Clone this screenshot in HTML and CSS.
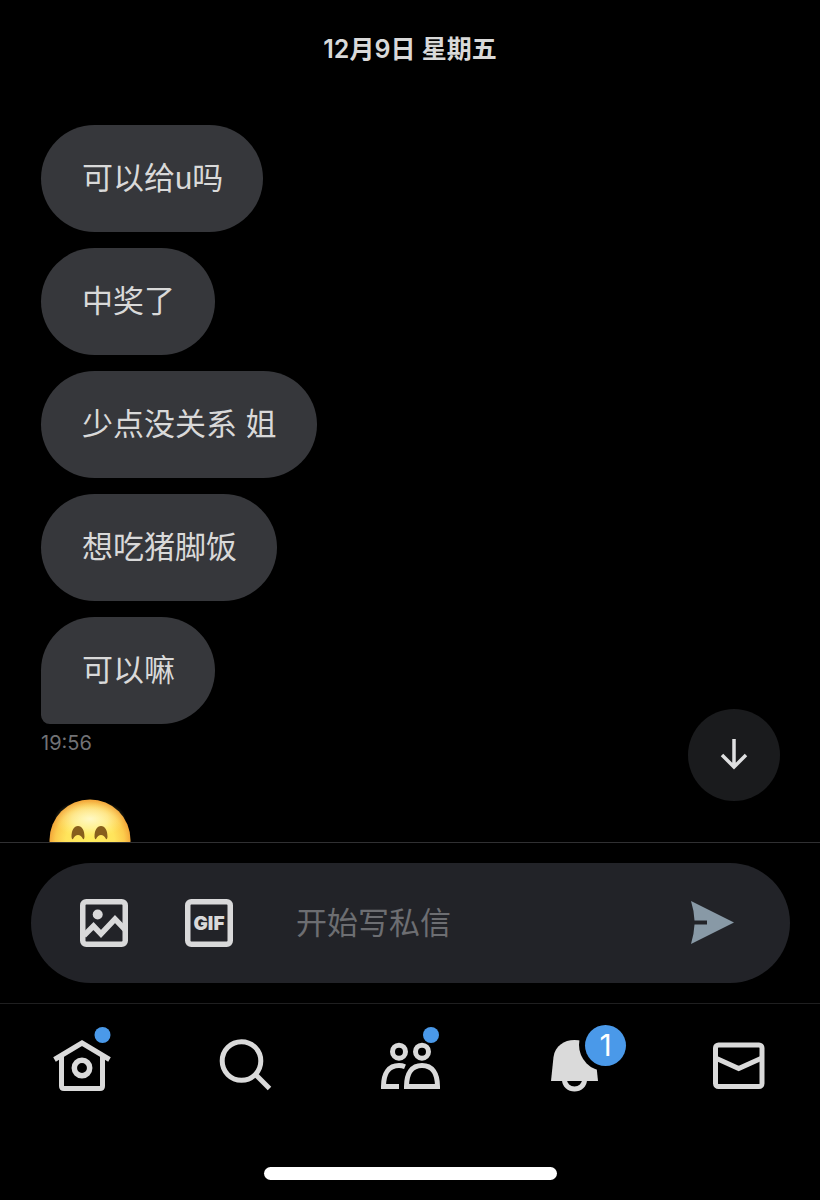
FILE: index.html
```html
<!DOCTYPE html>
<html lang="zh-CN">
<head>
    <meta charset="UTF-8">
    <meta name="viewport" content="width=device-width, initial-scale=1.0">
    <title>私信</title>
    <link rel="stylesheet" href="styles.css">
</head>
<body>
    <main class="conversation">
        <h1 class="date">12月9日 星期五</h1>
        <div class="messages">
            <div class="bubble">可以给u吗</div>
            <div class="bubble">中奖了</div>
            <div class="bubble">少点没关系 姐</div>
            <div class="bubble">想吃猪脚饭</div>
            <div class="bubble last">可以嘛</div>
        </div>
        <time class="time">19:56</time>
        <svg class="emoji" viewBox="0 0 82 82" role="img" aria-label="😊">
            <defs>
                <radialGradient id="face" cx="0.5" cy="0.52" r="0.5">
                    <stop offset="0" stop-color="#ffee5e"/>
                    <stop offset="0.6" stop-color="#ffe45c"/>
                    <stop offset="0.85" stop-color="#fccb4c"/>
                    <stop offset="1" stop-color="#f3a83a"/>
                </radialGradient>
                <radialGradient id="shine">
                    <stop offset="0" stop-color="#fffde0" stop-opacity="0.8"/>
                    <stop offset="0.5" stop-color="#fffbc8" stop-opacity="0.5"/>
                    <stop offset="1" stop-color="#fff58a" stop-opacity="0"/>
                </radialGradient>
            </defs>
            <circle cx="41" cy="41" r="40.5" fill="url(#face)"/>
            <ellipse cx="41" cy="20" rx="36" ry="19" fill="url(#shine)"/>
            <g fill="#875f1c">
                <path d="M22.5 38C22.5 31 25 27 29 27s6.500 4 6.500 11q-.5 3-1.500 2-2-4-5-4t-5 4q-1 1-1.500-2z"/>
                <path d="M45.500 38C45.500 31 48 27 52 27s6.500 4 6.500 11q-.5 3-1.500 2-2-4-5-4t-5 4q-1 1-1.500-2z"/>
            </g>
            <path d="M20 54q21 22 42 0" fill="none" stroke="#875f1c" stroke-width="4" stroke-linecap="round"/>
        </svg>
        <button class="scroll-down" type="button" aria-label="滚动到底部">
            <svg width="28" height="32" viewBox="0 0 28 32" fill="none" stroke="#dfe0e1" stroke-width="3.500">
                <path d="M14 0v28M2 16L14 28 26 16"/>
            </svg>
        </button>
    </main>

    <form class="composer">
        <div class="composer-bar">
            <button class="tool" type="button" aria-label="图片">
                <svg width="48" height="48" viewBox="0 0 48 48" fill="none" stroke="#d9d9da" stroke-width="5.500">
                    <rect x="2.750" y="2.750" width="42.500" height="42.500" rx="3.500"/>
                    <path d="M4 36.500l9.500-9.500L21 35l14-15 10 10.500"/>
                    <circle cx="17.700" cy="15.500" r="5" fill="#d9d9da" stroke="none"/>
                </svg>
            </button>
            <button class="tool" type="button" aria-label="GIF">
                <svg width="48" height="48" viewBox="0 0 48 48">
                    <rect x="2.750" y="2.750" width="42.500" height="42.500" rx="3.500" fill="none" stroke="#d9d9da" stroke-width="5.500"/>
                    <text class="gif" x="24" y="31" text-anchor="middle">GIF</text>
                </svg>
            </button>
            <input class="field" type="text" placeholder="开始写私信" aria-label="开始写私信">
            <button class="tool" type="submit" aria-label="发送">
                <svg width="43" height="44" viewBox="0 0 43 44" fill="#8899a6">
                    <path d="M0 0L43 21.500 0 43Q3 33.500 3.500 23.500H16v-4H3.500Q3 9.500 0 0z"/>
                </svg>
            </button>
        </div>
    </form>

    <nav class="tabs">
        <a class="tab" href="#" aria-label="主页">
            <svg viewBox="0 0 120 84" fill="none" stroke="#dadada" stroke-width="5">
                <path d="M32.500 39.500L60 23 87.500 39.500"/>
                <path d="M39.500 36v30q0 2.500 2.500 2.500h36q2.500 0 2.500-2.500V36"/>
                <circle cx="60" cy="48" r="7.700" stroke-width="5.500"/>
                <circle cx="80.500" cy="15" r="8" fill="#4a99e9" stroke="none"/>
            </svg>
        </a>
        <a class="tab" href="#" aria-label="搜索">
            <svg viewBox="0 0 120 84" fill="none" stroke="#dadada" stroke-width="5">
                <circle cx="55.500" cy="41" r="19.300"/>
                <path d="M69 54L83.500 68.500"/>
            </svg>
        </a>
        <a class="tab" href="#" aria-label="社群">
            <svg viewBox="0 0 120 84" fill="none" stroke="#dadada" stroke-width="5">
                <circle cx="49" cy="31.700" r="6.500"/>
                <circle cx="72" cy="31.700" r="6.500"/>
                <path d="M49 66.500H33.500C33.500 53 39 45.500 49 45.500q3 0 6 1.200"/>
                <path d="M56.500 66.500C56.500 53 62 45.500 72 45.500S87.500 53 87.500 66.500z"/>
                <circle cx="81" cy="15" r="8" fill="#4a99e9" stroke="none"/>
            </svg>
        </a>
        <a class="tab" href="#" aria-label="通知">
            <svg viewBox="0 0 120 84">
                <path d="M37 61l2.500-24C41 26 50 20 60.500 20S80 26 81.500 37L84 61z" fill="#dadada"/>
                <path d="M50.500 60a10 9 0 0 0 20 0" fill="none" stroke="#dadada" stroke-width="5"/>
                <circle cx="91" cy="25" r="26" fill="#000"/>
            </svg>
            <span class="badge">1</span>
        </a>
        <a class="tab" href="#" aria-label="私信">
            <svg viewBox="0 0 120 84" fill="none" stroke="#dadada" stroke-width="5">
                <rect x="37.500" y="25" width="46.500" height="41.500" rx="3"/>
                <path d="M37.500 38l23.200 10.500L84 38"/>
            </svg>
        </a>
    </nav>
    <div class="home-indicator"></div>
</body>
</html>
```

FILE: styles.css
```css
* {
    box-sizing: border-box;
}
body {
    margin: 0;
    height: 100vh;
    display: flex;
    flex-direction: column;
    background-color: #000;
    color: #d9d9d9;
    font-family: Inter, "Noto Sans CJK SC", sans-serif;
}
button {
    padding: 0;
    border: none;
    background: none;
    font-family: inherit;
    cursor: pointer;
}
svg {
    display: block;
}

/* Messages */
.conversation {
    position: relative;
    flex: 1;
    min-height: 0;
    overflow: hidden;
    padding: 31px 41px 0;
}
.date {
    margin: 0 0 58px;
    font-size: 25px;
    line-height: 36px;
    font-weight: 600;
    text-align: center;
}
.messages {
    display: flex;
    flex-direction: column;
    align-items: flex-start;
    gap: 16px;
}
.bubble {
    padding: 32px 40px 31px 41px;
    border-radius: 54px;
    background-color: #36373b;
    font-family: "Liberation Sans", "Noto Sans CJK SC", sans-serif;
    font-size: 31px;
    line-height: 44px;
}
.bubble.last {
    border-bottom-left-radius: 9px;
}
.time {
    display: block;
    margin-top: 7px;
    color: #717275;
    font-size: 20px;
    line-height: 24px;
}
.emoji {
    width: 82px;
    height: 82px;
    margin: 44px 0 0 8px;
}
.scroll-down {
    position: absolute;
    right: 40px;
    bottom: 41px;
    width: 92px;
    height: 92px;
    display: flex;
    justify-content: center;
    align-items: center;
    border-radius: 50%;
    background-color: #1a1b1d;
}

/* Composer */
.composer {
    padding: 20px 30px 20px 31px;
    border-top: 1px solid #303032;
}
.composer-bar {
    display: flex;
    align-items: center;
    gap: 57px;
    height: 120px;
    padding: 0 56px 0 49px;
    border-radius: 60px;
    background-color: #222328;
}
.gif {
    fill: #d9d9da;
    font-size: 19px;
    font-weight: 900;
}
.field {
    flex: 1;
    min-width: 0;
    padding: 0 6px;
    border: none;
    outline: none;
    background: none;
    color: #d9d9d9;
    font-family: inherit;
    font-size: 31px;
    line-height: 44px;
}
.field::placeholder {
    color: #6d6e72;
    opacity: 1;
}

/* Bottom tabs */
.tabs {
    display: flex;
    padding-top: 16px;
    border-top: 1px solid #1f1f20;
}
.tab {
    position: relative;
    flex: 1;
    display: flex;
    justify-content: center;
}
.tab svg {
    width: 120px;
    height: 84px;
}
.badge {
    position: absolute;
    top: 5px;
    left: calc(50% + 11px);
    width: 41px;
    height: 41px;
    border-radius: 50%;
    background-color: #4a99e9;
    color: #fff;
    font-size: 30px;
    line-height: 41px;
    text-align: center;
}
.home-indicator {
    width: 293px;
    height: 13px;
    margin: 63px auto 20px;
    border-radius: 7px;
    background-color: #fff;
}
```
